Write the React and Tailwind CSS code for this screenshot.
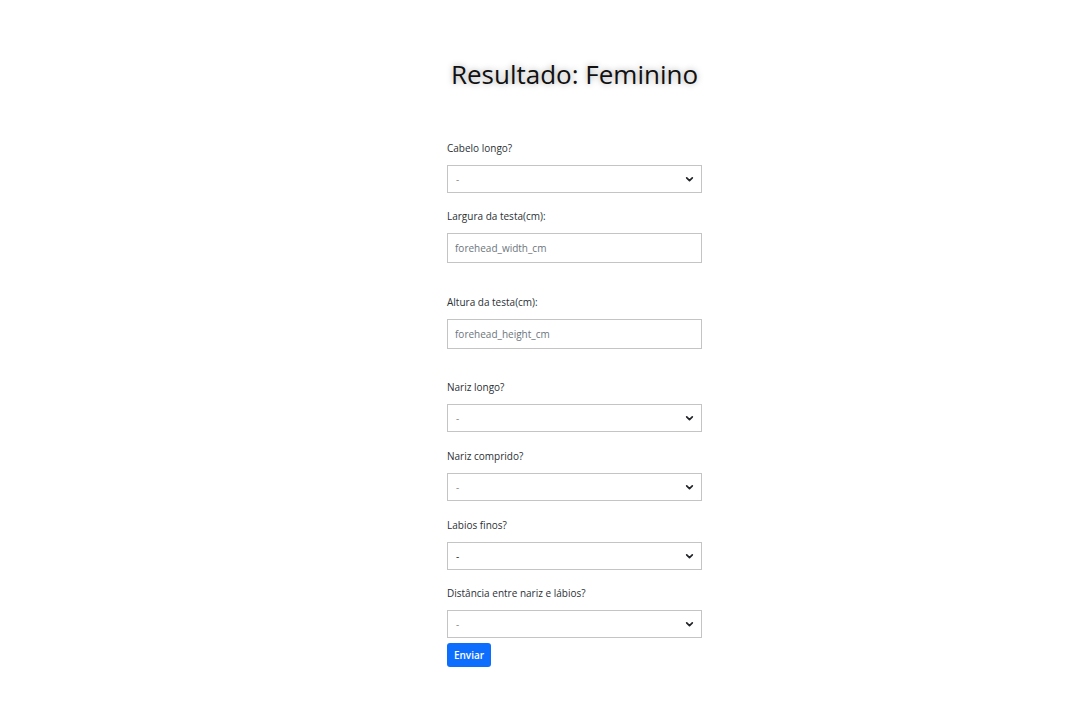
const fields = [
  { label: 'Cabelo longo?', type: 'select', gap: 'mt-0' },
  { label: 'Largura da testa(cm):', type: 'input', placeholder: 'forehead_width_cm', gap: 'mt-[16px]' },
  { label: 'Altura da testa(cm):', type: 'input', placeholder: 'forehead_height_cm', gap: 'mt-[32px]' },
  { label: 'Nariz longo?', type: 'select', gap: 'mt-[31px]' },
  { label: 'Nariz comprido?', type: 'select', gap: 'mt-[17px]' },
  { label: 'Labios finos?', type: 'select', dark: true, gap: 'mt-[17px]' },
  { label: 'Distância entre nariz e lábios?', type: 'select', gap: 'mt-[16px]' },
]

function Chevron() {
  return (
    <svg
      className="pointer-events-none absolute right-[8px] top-1/2 h-[9px] w-[9px] -translate-y-1/2"
      viewBox="0 0 16 16"
      fill="none"
      stroke="#212529"
      strokeWidth="3"
      strokeLinecap="round"
      strokeLinejoin="round"
    >
      <path d="M3 6l5 5 5-5" />
    </svg>
  )
}

function Field({ field }) {
  return (
    <div className={field.gap}>
      <label className="block text-[10px] leading-[15px] text-[#2b3035]">{field.label}</label>
      {field.type === 'select' ? (
        <div className="relative mt-[9px]">
          <select
            defaultValue="-"
            className={`block h-[28px] w-full appearance-none rounded-none border border-[#c4c4c4] bg-white pl-[8px] text-[10px] outline-none ${
              field.dark ? 'text-[#212529]' : 'text-[#8a8a8a]'
            }`}
          >
            <option value="-">-</option>
            <option value="1">Sim</option>
            <option value="0">Não</option>
          </select>
          <Chevron />
        </div>
      ) : (
        <input
          type="text"
          placeholder={field.placeholder}
          className="mt-[9px] block h-[30px] w-full rounded-none border border-[#c4c4c4] bg-white px-[7px] text-[10px] text-[#212529] outline-none placeholder:text-[#6c757d]"
        />
      )}
    </div>
  )
}

export default function App() {
  return (
    <div className="min-h-[720px] bg-white font-['Open_Sans',sans-serif]">
      <div className="ml-[447px] w-[255px] pt-[58px]">
        <h1 className="whitespace-nowrap text-center text-[26px] leading-[32px] font-medium text-[#111] [text-shadow:0_0_6px_rgba(0,0,0,0.35)]">
          Resultado: Feminino
        </h1>
        <form className="mt-[51px]">
          {fields.map((field) => (
            <Field key={field.label} field={field} />
          ))}
          <button
            type="button"
            className="mt-[5px] h-[24px] w-[44px] rounded-[3px] bg-[#0d6efd] text-[10px] font-semibold text-white"
          >
            Enviar
          </button>
        </form>
      </div>
    </div>
  )
}
